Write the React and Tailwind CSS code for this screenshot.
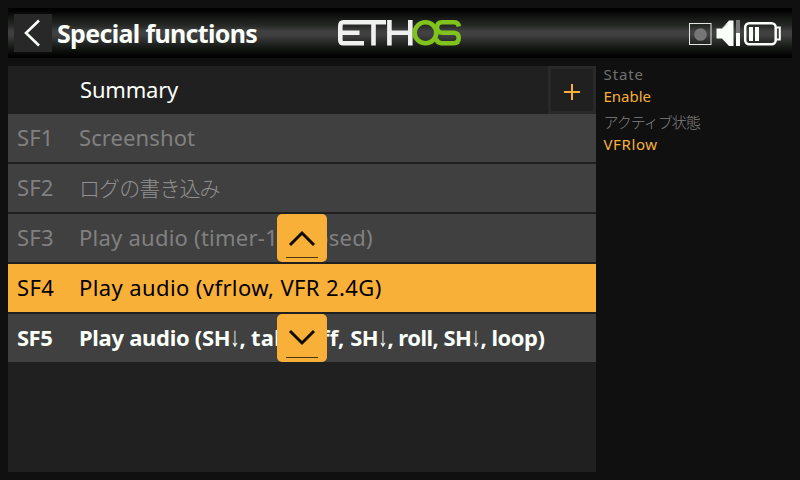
import React from "react";

function Down() {
  return <span className="mx-[0.6px] inline-block origin-[50%_60%] -translate-y-[2px] scale-x-[1.12] scale-y-[1.7] font-['Liberation_Sans',sans-serif] text-[16px] leading-none font-bold tracking-normal">↓</span>;
}

const rowBase = "flex h-12 items-center whitespace-pre pb-0.5 pl-[9px] text-[22px] leading-[30px]";

function Row({ id, className, children }) {
  return (
    <div className={`${rowBase} ${className}`}>
      <span className="block h-[30px] w-[62px] shrink-0">{id}</span>
      <span className="block h-[30px]">{children}</span>
    </div>
  );
}

function Logo() {
  return (
    <svg className="block" width="124" height="26" viewBox="0 0 124 26" fill="none">
      <g stroke="#f0f0f0" strokeWidth="4.6">
        <path d="M48 2.3H5.5Q2.3 2.3 2.3 6V20Q2.3 23.2 5.5 23.2H26M2.3 12.7H21.5M35.5 2.3V25.5" />
        <path d="M51.4 0V25.5M72.3 0V25.5M51.4 12.7H72.3" />
      </g>
      <g stroke="#7fc31c" strokeWidth="4.6">
        <ellipse cx="87.5" cy="12.8" rx="10.8" ry="10.5" />
        <path d="M121 6.5Q120 2.3 116 2.3H104Q99 2.5 99 7.5Q99 12.7 104.5 12.7H116Q120.7 13 120.7 18Q120.7 23.2 115.5 23.2H103.5Q99 23 98.3 18.5" />
      </g>
    </svg>
  );
}

function StatusIcons() {
  return (
    <svg className="block" width="94" height="28" viewBox="0 0 94 28" fill="none">
      <rect x="1.5" y="4.5" width="21.5" height="21" stroke="#e4e4e4" strokeWidth="1" />
      <circle cx="12.5" cy="15.5" r="6.3" fill="#767676" />
      <path d="M28.5 9.5H34L41 1.5H45.5V27H41L34 19.5H28.5Z" fill="#fafffa" />
      <path d="M34 9.5L39.5 5" stroke="#aaa" strokeWidth=".7" />
      <rect x="48" y="1" width="4" height="13" fill="#777" />
      <rect x="48" y="14" width="4" height="13" fill="#fafffa" />
      <rect x="57.2" y="4.2" width="30.5" height="21" rx="4" stroke="#fafffa" strokeWidth="2.5" />
      <path d="M88.5 8.5H91.8V20.5H88.5" stroke="#fafffa" strokeWidth="2" />
      <path d="M61 8H65V22H61ZM67 8H71V22H67Z" fill="#fafffa" />
    </svg>
  );
}

function MoveButton({ d, className }) {
  return (
    <button className={`absolute left-[269px] h-12 w-[50px] rounded-[5px] bg-[#f9b038] ${className}`}>
      <svg className="block" width="50" height="48" viewBox="0 0 50 48" fill="none">
        <path d={d} stroke="#100c04" strokeWidth="3" />
        <path d="M9 43.5H41" stroke="#4c3510" strokeWidth="1" />
      </svg>
    </button>
  );
}

export default function App() {
  return (
    <div className="flex h-[480px] w-[800px] flex-col overflow-hidden bg-[#101010] p-2 font-['Noto_Sans','Noto_Sans_CJK_JP',sans-serif]">
      <header className="grid h-[50px] shrink-0 grid-cols-[330px_1fr_112px] items-center bg-[linear-gradient(to_bottom,#000_0%,#020302_6%,#181a18_22%,#282a28_36%,#404040_46%,#404040_54%,#282a28_68%,#121412_82%,#020302_96%,#000_100%)]">
        <div className="flex items-center pl-1.5">
          <button className="h-[38px] w-[38px] bg-[#282828]">
            <svg className="block" width="38" height="38" viewBox="0 0 38 38" fill="none">
              <path d="M25 6.5L12 19L25 31.5" stroke="#fafffa" strokeWidth="2.6" />
            </svg>
          </button>
          <h1 className="ml-[5px] whitespace-nowrap text-[25px] leading-[32px] font-bold tracking-[-0.67px] text-[#fafffa]">Special functions</h1>
        </div>
        <Logo />
        <div className="pl-2"><StatusIcons /></div>
      </header>
      <main className="mt-2 flex h-[406px] shrink-0">
        <section className="relative w-[588px] shrink-0 bg-[#202020]">
          <div className="flex h-12 items-center justify-between pl-[72px]">
            <span className="pb-0.5 text-[22px] leading-[30px] tracking-[-0.2px] text-[#fafffa]">Summary</span>
            <button className="flex h-12 w-12 items-center justify-center border-[3px] border-[#292929] bg-[#202020] pt-1">
              <svg width="16" height="16" viewBox="0 0 16 16">
                <path d="M8 0V16M0 8H16" stroke="#f9b038" strokeWidth="2" />
              </svg>
            </button>
          </div>
          <div className="flex flex-col gap-0.5">
            <Row id="SF1" className="bg-[#404040] tracking-[0.1px] text-[#808080]">Screenshot</Row>
            <Row id="SF2" className="bg-[#404040] tracking-[0.1px] text-[#808080]">
              <span className="text-[21px] font-light tracking-[-0.9px] text-[#909090]">ログの書き込み</span>
            </Row>
            <Row id="SF3" className="bg-[#404040] tracking-[0.24px] text-[#808080]">Play audio (timer-1 elapsed)</Row>
            <Row id="SF4" className="bg-[#f9b038] tracking-[0.4px] text-black">Play audio (vfrlow, VFR 2.4G)</Row>
            <Row id="SF5" className="bg-[#404040] font-bold tracking-[-0.52px] text-[#fafffa]">
              <span className="tracking-[-0.3px]">Play audio (SH<Down />, </span><span className="tracking-[0.18px]">take off, </span>SH<Down />, roll, SH<Down />, loop)
            </Row>
          </div>
          <MoveButton className="top-[148px]" d="M13 31L25 19L37 31" />
          <MoveButton className="top-[248px]" d="M13 17L25 29L37 17" />
        </section>
        <aside className="flex flex-col pl-[7.5px] text-[15px] leading-[22px] whitespace-nowrap">
          <div className="h-12">
            <div className="-mt-[3px] tracking-[0.9px] text-[#707070]">State</div>
            <div className="text-[#f9b038]">Enable</div>
          </div>
          <div className="h-12">
            <div className="-mt-[3px] font-light tracking-[-1px] text-[#808080]">アクティブ状態</div>
            <div className="tracking-[0.6px] text-[#f9b038]">VFRlow</div>
          </div>
        </aside>
      </main>
    </div>
  );
}
